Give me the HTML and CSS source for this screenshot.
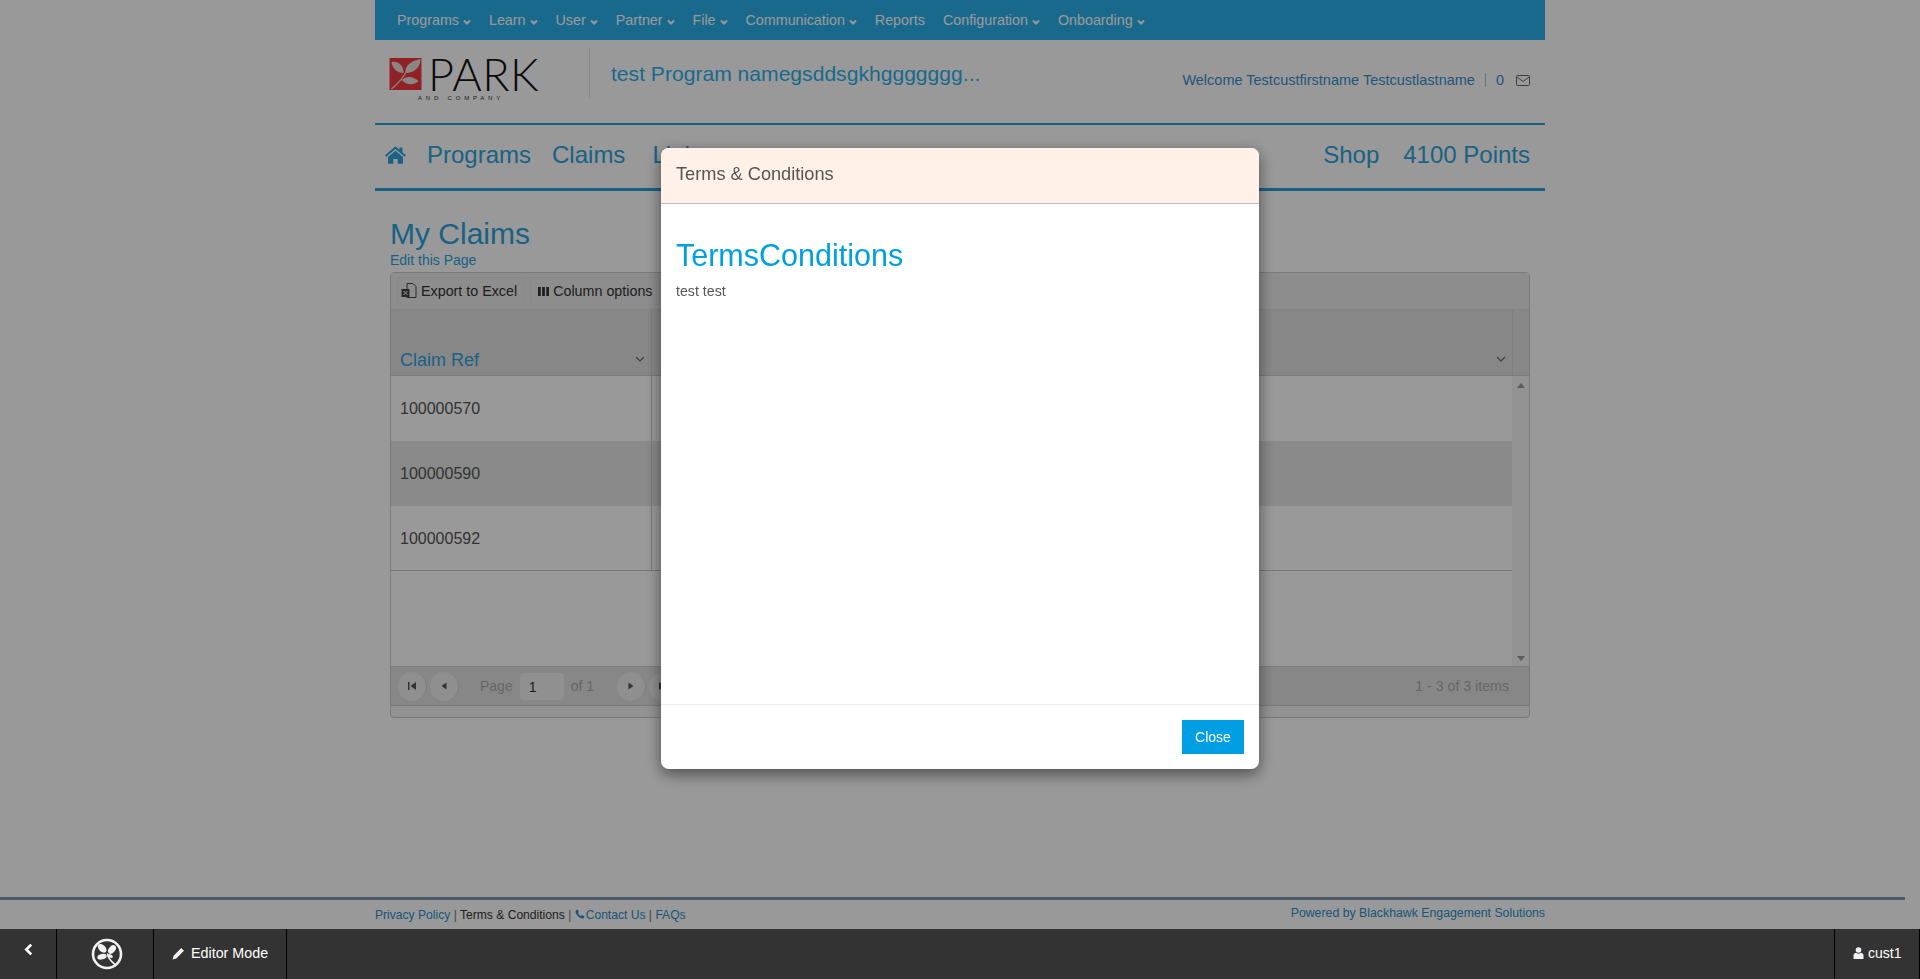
FILE: index.html
```html
<!DOCTYPE html>
<html lang="en">
<head>
  <meta charset="UTF-8" />
  <title>My Claims</title>
  <link rel="stylesheet" href="styles.css">
</head>
<body>
  <div class="page">
    <nav class="topnav">
      <a>Programs <svg class="caret" viewBox="0 0 8 6"><path d="M1 1.5l3 3 3-3"/></svg></a>
      <a>Learn <svg class="caret" viewBox="0 0 8 6"><path d="M1 1.5l3 3 3-3"/></svg></a>
      <a>User <svg class="caret" viewBox="0 0 8 6"><path d="M1 1.5l3 3 3-3"/></svg></a>
      <a>Partner <svg class="caret" viewBox="0 0 8 6"><path d="M1 1.5l3 3 3-3"/></svg></a>
      <a>File <svg class="caret" viewBox="0 0 8 6"><path d="M1 1.5l3 3 3-3"/></svg></a>
      <a>Communication <svg class="caret" viewBox="0 0 8 6"><path d="M1 1.5l3 3 3-3"/></svg></a>
      <a>Reports</a>
      <a>Configuration <svg class="caret" viewBox="0 0 8 6"><path d="M1 1.5l3 3 3-3"/></svg></a>
      <a>Onboarding <svg class="caret" viewBox="0 0 8 6"><path d="M1 1.5l3 3 3-3"/></svg></a>
    </nav>

    <header class="brand">
      <div class="logo">
        <svg class="logo-mark" viewBox="0 0 32 32">
          <rect width="32" height="32" fill="#f0383f"/>
          <path d="M2 31C9 25 14 20 17 13" fill="none" stroke="#e8dfdc" stroke-width="1.2"/>
          <path d="M16 15C15 8 21 3 31 1C31 9 25 15 16 15ZM2 4C9 3 14 7 14 15C8 15 3 11 2 4ZM12 22C17 18 23 18 29 23C24 28 17 27 12 22Z" fill="#e8dfdc"/>
        </svg>
        <div class="logo-text">
          <span class="logo-name">PARK</span>
          <span class="logo-sub">AND COMPANY</span>
        </div>
      </div>
      <div class="program-name">test Program namegsddsgkhggggggg...</div>
      <div class="welcome">
        <span>Welcome Testcustfirstname Testcustlastname</span>
        <span class="sep"></span>
        <span>0</span>
        <svg class="mail" viewBox="0 0 14 11"><rect x=".5" y=".5" width="13" height="10" rx="1"/><path d="M1 2l6 4.5L13 2"/></svg>
      </div>
    </header>

    <nav class="mainnav">
      <svg class="home" viewBox="0 0 24 20"><path d="M12 0l4.500 3.900V1.500h3.400v5.300L24 10.400l-1.500 1.700L12 3 1.500 12.100 0 10.400zM12 5l8.500 7.300V20h-6v-5.500h-5V20h-6v-7.700z"/></svg>
      <a>Programs</a>
      <a>Claims</a>
      <a class="nav-links">Links</a>
      <div class="mainnav-right">
        <a>Shop</a>
        <a>4100 Points</a>
      </div>
    </nav>

    <main class="content">
      <h1>My Claims</h1>
      <a class="edit-link">Edit this Page</a>

      <section class="grid">
        <div class="grid-toolbar">
          <button class="tool-btn">
            <svg class="tool-icon" viewBox="0 0 16 16"><path d="M6 .5h6l3 3v11H6z" fill="none" stroke="#444"/><rect x=".5" y="6" width="8" height="8" fill="#444"/><path d="M2.500 8l4 4M6.500 8l-4 4" stroke="#fff"/></svg>
            Export to Excel
          </button>
          <button class="tool-btn tool-btn-columns">
            <svg class="tool-icon-small" viewBox="0 0 12 12"><path d="M0 1h3v10H0zM4.500 1h3v10h-3zM9 1h3v10H9z" fill="#333"/></svg>
            Column options
          </button>
        </div>
        <div class="grid-head">
          <div class="cell-first">Claim Ref <svg class="sort" viewBox="0 0 10 6"><path d="M1 1l4 4 4-4"/></svg></div>
          <div class="cell-rest"><svg class="sort" viewBox="0 0 10 6"><path d="M1 1l4 4 4-4"/></svg></div>
        </div>
        <div class="grid-body">
          <div class="grid-rows">
            <div class="row"><div class="cell-first">100000570</div><div class="cell-rest"></div></div>
            <div class="row row-alt"><div class="cell-first">100000590</div><div class="cell-rest"></div></div>
            <div class="row row-last"><div class="cell-first">100000592</div><div class="cell-rest"></div></div>
          </div>
          <div class="scrollbar">
            <svg viewBox="0 0 8 5"><path d="M4 0l4 5H0z"/></svg>
            <svg viewBox="0 0 8 5"><path d="M4 5l4-5H0z"/></svg>
          </div>
        </div>
        <div class="pager">
          <button class="page-btn"><svg viewBox="0 0 10 10"><path d="M1 1h1.500v8H1zM9 1v8L3.500 5z"/></svg></button>
          <button class="page-btn"><svg viewBox="0 0 10 10"><path d="M7.500 1.500v7L2.500 5z"/></svg></button>
          <span class="page-label">Page</span>
          <input class="page-input" value="1" />
          <span class="page-of">of 1</span>
          <button class="page-btn page-next"><svg viewBox="0 0 10 10"><path d="M2.500 1.500v7l5-3.500z"/></svg></button>
          <button class="page-btn"><svg viewBox="0 0 10 10"><path d="M9 1H7.500v8H9zM1 1v8l5.500-4z"/></svg></button>
          <span class="page-count">1 - 3 of 3 items</span>
        </div>
      </section>
    </main>

    <footer class="footer">
      <div class="footer-inner">
        <div class="footer-links">
          <a>Privacy Policy</a> | <span class="current">Terms &amp; Conditions</span> |
          <svg class="phone" viewBox="0 0 10 10"><path d="M2.500.500L4 3 3 4c.5 1.300 1.600 2.400 3 3l1-1 2.500 1.500C9 9 8 9.800 7 9.500 4 8.800 1.200 6 .5 3 .2 2 1 1 2.500.500z"/></svg><a>Contact Us</a> | <a>FAQs</a>
        </div>
        <a class="powered">Powered by Blackhawk Engagement Solutions</a>
      </div>
    </footer>
  </div>

  <div class="overlay">
    <div class="modal">
      <div class="modal-head">Terms &amp; Conditions</div>
      <div class="modal-body">
        <h2>TermsConditions</h2>
        <p>test test</p>
      </div>
      <div class="modal-foot">
        <button class="close-btn">Close</button>
      </div>
    </div>
  </div>

  <div class="editor-bar">
    <div class="bar-back"><svg viewBox="0 0 8 12"><path d="M6.500 1.500L2 6l4.500 4.500" /></svg></div>
    <div class="bar-logo">
      <svg viewBox="0 0 32 32">
        <circle cx="16" cy="16" r="14" fill="none" stroke="#f2f2f2" stroke-width="2.600"/>
        <g fill="#f2f2f2">
          <ellipse cx="11.200" cy="10.300" rx="5.200" ry="3.300" transform="rotate(45 11.200 10.300)"/>
          <ellipse cx="21" cy="11.500" rx="4.800" ry="3.200" transform="rotate(-50 21 11.500)"/>
          <ellipse cx="11" cy="18.700" rx="4.800" ry="2.700" transform="rotate(-15 11 18.700)"/>
          <ellipse cx="19.500" cy="18" rx="2.600" ry="1.500" transform="rotate(30 19.500 18)"/>
        </g>
        <path d="M16.500 15.500c.5 4 3 7.500 7.500 11" fill="none" stroke="#f2f2f2" stroke-width="1.800"/>
      </svg>
    </div>
    <div class="bar-editor">
      <svg viewBox="0 0 12 12"><path d="M8.500 1l2.500 2.500L4 10.500 .5 11.500 1.500 8z"/></svg>
      Editor Mode
    </div>
    <div class="bar-user">
      <svg viewBox="0 0 10 12"><circle cx="5" cy="3" r="2.800"/><path d="M0 12V8.500C0 6.800 1.500 6 2.800 5.800 3.500 6.400 4.200 6.700 5 6.700s1.500-.3 2.200-.9C8.500 6 10 6.800 10 8.500V12z"/></svg>
      cust1
    </div>
  </div>
</body>
</html>
```

FILE: styles.css
```css
* {
  box-sizing: border-box;
}

html, body {
  margin: 0;
  height: 100%;
}

body {
  font-family: "Liberation Sans", Arial, sans-serif;
  font-size: 14px;
  color: #555;
  background: #fff;
  overflow: hidden;
}

button, input {
  font-family: inherit;
}

.page {
  display: flex;
  flex-direction: column;
  width: 100%;
  height: 100vh;
  padding-bottom: 50px;
}

/* top menu */
.topnav {
  display: flex;
  align-items: center;
  gap: 18px;
  width: 1170px;
  height: 40px;
  margin: 0 auto;
  padding: 0 22px;
  background: #2bb0ec;
  font-size: 14.300px;
  flex: none;
}

.topnav a {
  color: #fff;
  white-space: nowrap;
}

.caret {
  width: 8px;
  height: 6px;
  fill: none;
  stroke: #fff;
  stroke-width: 2;
}

/* logo row */
.brand {
  display: flex;
  align-items: flex-start;
  width: 1170px;
  height: 83px;
  margin: 0 auto;
  flex: none;
}

.logo {
  display: flex;
  width: 215px;
  height: 50px;
  margin-top: 8px;
  padding-left: 14px;
  border-right: 1px solid #e6e6e6;
}

.logo-mark {
  width: 33px;
  height: 32px;
  margin: 10px 6px 0 0;
}

.logo-text {
  display: flex;
  flex-direction: column;
  align-items: flex-start;
}

.logo-name {
  margin-top: 10px;
  font-family: Lato, sans-serif;
  font-weight: 300;
  font-size: 45px;
  line-height: 32px;
  letter-spacing: 0.500px;
  color: #111;
}

.logo-sub {
  margin: 4px 0 0 -10px;
  font-size: 6px;
  letter-spacing: 3.800px;
  line-height: 8px;
  white-space: nowrap;
  color: #333;
}

.program-name {
  margin: 22px 0 0 21px;
  font-size: 21.100px;
  line-height: 24px;
  color: #2bb0ec;
}

.welcome {
  display: flex;
  align-items: center;
  gap: 10px;
  margin: 31px 15px 0 auto;
  font-size: 14.500px;
  line-height: 18px;
  color: #3a8fc7;
}

.sep {
  width: 1px;
  height: 14px;
  background: #9cc6de;
}

.mail {
  width: 14px;
  height: 11px;
  margin-left: 2px;
  fill: none;
  stroke: #666;
  stroke-width: 1;
}

/* main menu */
.mainnav {
  display: flex;
  align-items: center;
  gap: 21px;
  width: 1170px;
  height: 68px;
  margin: 0 auto;
  padding: 0 15px 4px 10px;
  border-top: 2px solid #2b9fd4;
  border-bottom: 3px solid #2b9fd4;
  font-size: 24px;
  color: #2ba3dc;
  flex: none;
}

.home {
  width: 21px;
  height: 18px;
  fill: #2ba3dc;
}

.nav-links {
  margin-left: 6px;
}

.mainnav-right {
  display: flex;
  gap: 24px;
  margin-left: auto;
}

/* page content */
.content {
  width: 1170px;
  margin: 0 auto;
  padding: 26px 15px 0;
  flex: none;
}

.content h1 {
  margin: 0;
  font-size: 30px;
  font-weight: normal;
  line-height: 33px;
  color: #2ba3dc;
}

.edit-link {
  display: block;
  margin-top: 1px;
  line-height: 18px;
  color: #2ba3dc;
}

.grid {
  display: flex;
  flex-direction: column;
  height: 446px;
  margin-top: 3px;
  border: 1px solid #ccc;
  border-radius: 4px;
  background: #f5f5f5;
}

.grid-toolbar {
  display: flex;
  gap: 6px;
  height: 37px;
  padding: 4px 6px;
  background: #ececec;
  border-bottom: 1px solid #ddd;
}

.tool-btn {
  display: flex;
  align-items: center;
  gap: 4px;
  height: 28px;
  padding: 0 6px 0 3px;
  border: 1px solid #e4e4e4;
  border-radius: 3px;
  background: #ececec;
  font-size: 14.300px;
  color: #333;
}

.tool-btn-columns {
  padding-left: 7px;
}

.tool-icon {
  width: 16px;
  height: 16px;
}

.tool-icon-small {
  width: 11px;
  height: 11px;
}

.grid-head {
  display: flex;
  height: 66px;
  background: #e2e2e2;
  border-bottom: 1px solid #ccc;
  font-size: 18px;
  color: #2ba3dc;
}

.grid-head .cell-first,
.grid-head .cell-rest {
  display: flex;
  align-items: flex-end;
  justify-content: space-between;
  padding: 0 6px 3px 9px;
  line-height: 24px;
  border-right: 1px solid #d0d0d0;
}

.grid-head .cell-rest {
  justify-content: flex-end;
  width: 861px;
  flex: none;
}

.sort {
  width: 10px;
  height: 6px;
  margin-bottom: 10px;
  fill: none;
  stroke: #666;
  stroke-width: 1.200;
}

.cell-first {
  width: 261px;
  flex: none;
}

.cell-rest {
  flex: 1;
}

.grid-body {
  display: flex;
  height: 290px;
  background: #fff;
}

.grid-rows {
  flex: 1;
}

.row {
  display: flex;
  height: 65px;
  font-size: 16px;
  line-height: 65px;
}

.row-alt {
  background: #e6e6e6;
}

.row-last {
  border-bottom: 1px solid #c8c8c8;
}

.row .cell-first {
  padding-left: 9px;
  border-right: 1px solid #c8c8c8;
}

.scrollbar {
  display: flex;
  flex-direction: column;
  justify-content: space-between;
  align-items: center;
  width: 17px;
  padding: 7px 0 5px;
  background: #f5f5f5;
}

.scrollbar svg {
  width: 8px;
  height: 5px;
  fill: #999;
}

.pager {
  display: flex;
  align-items: center;
  height: 40px;
  padding: 0 20px 0 7px;
  background: #e2e2e2;
  border-top: 1px solid #d4d4d4;
  border-bottom: 1px solid #c8c8c8;
  color: #aaa;
}

.page-btn {
  display: flex;
  align-items: center;
  justify-content: center;
  width: 29px;
  height: 29px;
  margin-right: 3px;
  padding: 0;
  border: 0;
  border-right: 1px solid #c4d2e4;
  border-radius: 50%;
  background: #eee;
}

.page-btn svg {
  width: 10px;
  height: 10px;
  fill: #555;
}

.page-label {
  margin-left: 18px;
}

.page-input {
  width: 44px;
  height: 27px;
  margin: 0 7px;
  padding: 2px 9px 0;
  border: 0;
  border-radius: 4px;
  background: #f0f0f0;
  font-size: 14px;
  color: #333;
}

.page-next {
  margin-left: 23px;
}

.page-count {
  margin-left: auto;
  font-size: 14.200px;
}

/* footer */
.footer {
  width: 1905px;
  margin-top: auto;
  border-top: 3px solid #7c96ad;
  height: 32px;
  flex: none;
}

.footer-inner {
  display: flex;
  justify-content: space-between;
  width: 1170px;
  margin-left: 375px;
  font-size: 12.300px;
  color: #777;
}

.footer-links {
  padding-top: 8px;
  font-size: 12.100px;
}

.footer-links a,
.powered {
  color: #2b8fc7;
}

.footer-links .current {
  color: #333;
}

.phone {
  width: 10px;
  height: 10px;
  margin-right: 1px;
  fill: #2b8fc7;
}

.powered {
  padding-top: 6px;
}

/* modal */
.overlay {
  position: fixed;
  top: 0;
  left: 0;
  right: 0;
  bottom: 0;
  z-index: 10;
  background: rgba(0, 0, 0, 0.4);
}

.modal {
  display: flex;
  flex-direction: column;
  width: 598px;
  height: 621px;
  margin: 148px 0 0 661px;
  border-radius: 8px;
  background: #fff;
  box-shadow: 0 5px 15px rgba(0, 0, 0, 0.5);
  overflow: hidden;
}

.modal-head {
  height: 56px;
  padding: 0 15px;
  background: #fff1e8;
  border-bottom: 1px solid #bbb;
  font-size: 18.200px;
  line-height: 53px;
}

.modal-body {
  flex: 1;
  padding: 0 15px;
}

.modal-body h2 {
  margin: 35px 0 0;
  font-size: 30.500px;
  font-weight: normal;
  line-height: 33px;
  color: #009fe3;
}

.modal-body p {
  margin: 9px 0 0;
  font-size: 14.200px;
  line-height: 20px;
}

.modal-foot {
  display: flex;
  align-items: flex-start;
  justify-content: flex-end;
  height: 65px;
  padding: 15px 15px 0;
  border-top: 1px solid #eee;
}

.close-btn {
  width: 62px;
  height: 34px;
  border: 0;
  background: #009fe3;
  color: #fff;
  font-size: 14px;
}

/* editor bar */
.editor-bar {
  position: fixed;
  left: 0;
  right: 0;
  bottom: 0;
  z-index: 20;
  display: flex;
  height: 50px;
  background: #333;
  border-right: 1px solid #000;
  color: #fff;
  font-size: 14px;
}

.editor-bar > div {
  display: flex;
  align-items: center;
  border-right: 1px solid #000;
}

.bar-back {
  justify-content: center;
  width: 57px;
  padding-bottom: 10px;
}

.bar-back svg {
  width: 9px;
  height: 13px;
  fill: none;
  stroke: #fff;
  stroke-width: 2.500;
}

.bar-logo {
  justify-content: center;
  width: 97px;
  padding-left: 3px;
}

.bar-logo svg {
  width: 32px;
  height: 32px;
}

.bar-editor {
  gap: 6px;
  width: 133px;
  padding: 0 0 2px 18px;
  font-size: 14.300px;
}

.bar-editor svg {
  width: 13px;
  height: 13px;
  fill: #f2f2f2;
}

.editor-bar .bar-user {
  gap: 4px;
  width: 85px;
  margin-left: auto;
  padding: 0 0 2px 18px;
  border-right: 0;
  border-left: 1px solid #000;
}

.bar-user svg {
  width: 11px;
  height: 12px;
  fill: #f2f2f2;
}
```
